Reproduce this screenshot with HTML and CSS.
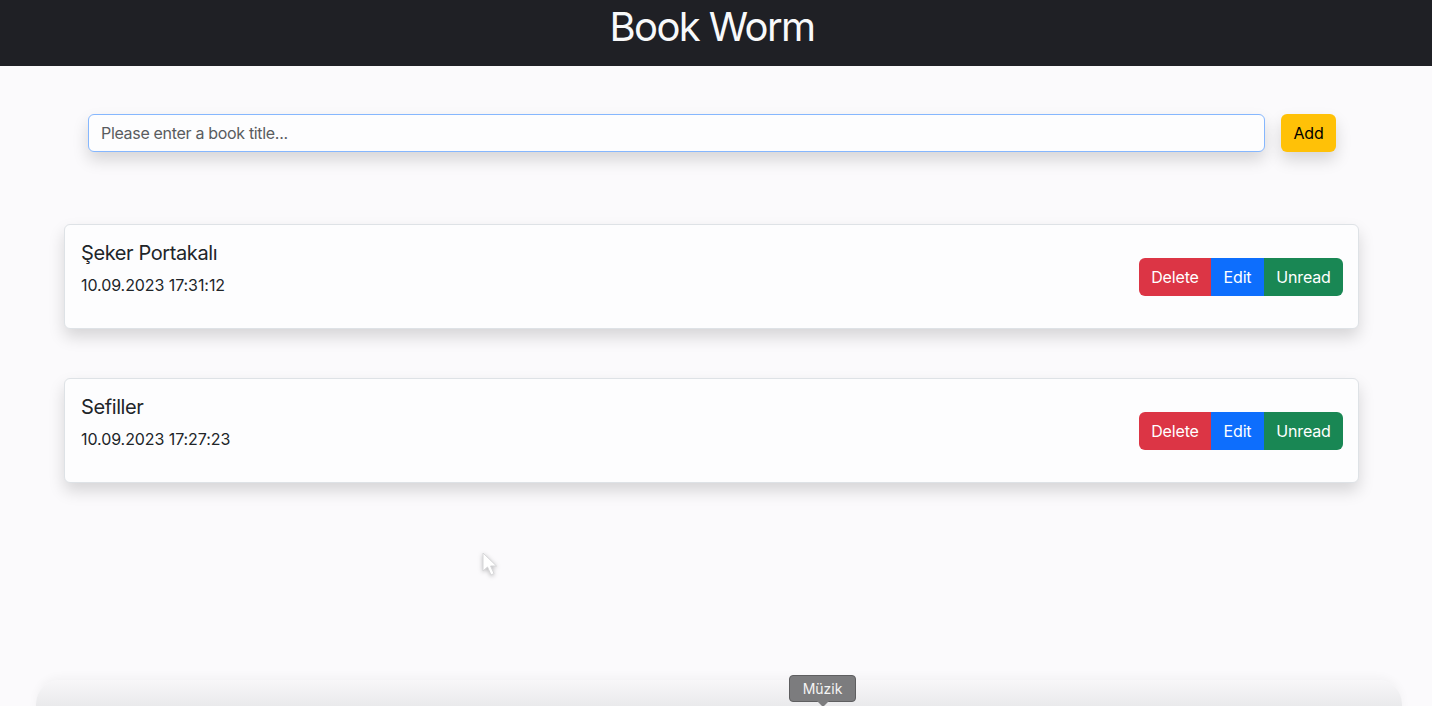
FILE: index.html
```html
<!DOCTYPE html>
<html lang="tr">
<head>
<meta charset="utf-8">
<title>Book Worm</title>
<link rel="stylesheet" href="styles.css">
</head>
<body>
<header class="topbar">
  <h1 class="brand">Book Worm</h1>
</header>
<main class="main">
  <form class="add-form">
    <input class="title-input" type="text" placeholder="Please enter a book title...">
    <button class="btn btn-add" type="button">Add</button>
  </form>
  <section class="book-list">
    <div class="book-card">
      <div class="book-info">
        <h5 class="book-title">Şeker Portakalı</h5>
        <p class="book-date">10.09.2023 17:31:12</p>
      </div>
      <div class="btn-group">
        <button class="btn btn-delete" type="button">Delete</button>
        <button class="btn btn-edit" type="button">Edit</button>
        <button class="btn btn-unread" type="button">Unread</button>
      </div>
    </div>
    <div class="book-card">
      <div class="book-info">
        <h5 class="book-title">Sefiller</h5>
        <p class="book-date">10.09.2023 17:27:23</p>
      </div>
      <div class="btn-group">
        <button class="btn btn-delete" type="button">Delete</button>
        <button class="btn btn-edit" type="button">Edit</button>
        <button class="btn btn-unread" type="button">Unread</button>
      </div>
    </div>
  </section>
</main>
<svg class="cursor" width="20" height="28" viewBox="0 0 20 28">
  <path d="M2 2 L2 20 L6.5 16 L10 24 L13 22.6 L9.6 15 L15.5 15 Z" fill="#ffffff" stroke="#d6d6d8" stroke-width="1"/>
</svg>
<div class="dock"></div>
<div class="dock-tip">Müzik</div>
</body>
</html>
```
FILE: styles.css
```css
* { box-sizing: border-box; }
html, body { margin: 0; padding: 0; }
body {
  background: #fbfafc;
  font-family: Inter, "Noto Sans", "Liberation Sans", sans-serif;
  color: #212529;
  height: 706px;
  overflow: hidden;
  position: relative;
  letter-spacing: -0.02em;
}
.topbar {
  background: #1f2025;
  height: 66px;
  display: flex;
  justify-content: center;
  align-items: flex-start;
  padding-right: 8px;
}
.brand {
  margin: 0;
  padding-top: 3px;
  font-size: 40px;
  line-height: 48px;
  font-weight: 400;
  color: #f8f9fa;
  letter-spacing: -0.04em;
}
.main {
  padding-top: 48px;
}
.add-form {
  display: flex;
  gap: 16px;
  margin: 0 96px 0 88px;
}
.title-input {
  flex: 1;
  height: 38px;
  border: 1px solid #86b7fe;
  border-radius: 6px;
  background: #fdfdfe;
  padding: 6px 12px;
  font-family: inherit;
  font-size: 16px;
  letter-spacing: -0.02em;
  color: #212529;
  box-shadow: 0 8px 16px rgba(0,0,0,0.15);
  outline: none;
}
.title-input::placeholder { color: #595c5f; }
.btn {
  font-family: inherit;
  font-size: 16px;
  line-height: 24px;
  letter-spacing: -0.01em;
  padding: 6px 12px;
  border: 1px solid transparent;
  cursor: pointer;
}
.btn-add {
  width: 55px;
  height: 38px;
  border-radius: 6px;
  background: #ffc107;
  color: #000;
  box-shadow: 0 8px 16px rgba(0,0,0,0.15);
  padding: 6px 0;
}
.book-list {
  margin: 72px 73px 0 64px;
  display: flex;
  flex-direction: column;
  gap: 49px;
}
.book-card {
  background: #fdfdfe;
  border: 1px solid #dee2e6;
  border-radius: 6px;
  box-shadow: 0 8px 16px rgba(0,0,0,0.15);
  padding: 16px 15px 0 16px;
  height: 105px;
  display: flex;
  justify-content: space-between;
  align-items: center;
}
.book-info { align-self: flex-start; }
.book-title {
  margin: 0 0 8px;
  font-size: 20px;
  line-height: 24px;
  font-weight: 400;
  letter-spacing: -0.02em;
}
.book-date {
  margin: 0 0 16px;
  font-size: 16px;
  line-height: 24px;
  letter-spacing: -0.005em;
}
.btn-group {
  display: flex;
  margin-top: -16px;
}
.btn-group .btn { color: #fff; height: 38px; }
.btn-delete { background: #dc3545; border-radius: 6px 0 0 6px; width: 72px; padding: 6px 0; }
.btn-edit { background: #0d6efd; width: 53px; padding: 6px 0; }
.btn-unread { background: #198754; border-radius: 0 6px 6px 0; width: 79px; padding: 6px 0; }
.cursor {
  position: absolute;
  left: 481px;
  top: 551px;
  filter: drop-shadow(0 1px 2px rgba(0,0,0,0.25));
}
.dock {
  position: absolute;
  left: 36px;
  right: 30px;
  top: 680px;
  height: 40px;
  border-radius: 24px 24px 0 0;
  background: linear-gradient(to bottom, rgba(244,244,246,0.5), #ebebed 60%, #e0e0e2);
  box-shadow: 0 -3px 10px rgba(0,0,0,0.035);
}
.dock-tip {
  position: absolute;
  left: 789px;
  top: 675px;
  width: 67px;
  height: 27px;
  background: #7c7c7e;
  border: 1px solid #5e5e60;
  border-radius: 4px;
  color: #f4f4f4;
  font-size: 14px;
  line-height: 25px;
  text-align: center;
  letter-spacing: 0;
}
.dock-tip::after {
  content: "";
  position: absolute;
  left: 27px;
  bottom: -6px;
  border-left: 6px solid transparent;
  border-right: 6px solid transparent;
  border-top: 6px solid #7c7c7e;
}
```
